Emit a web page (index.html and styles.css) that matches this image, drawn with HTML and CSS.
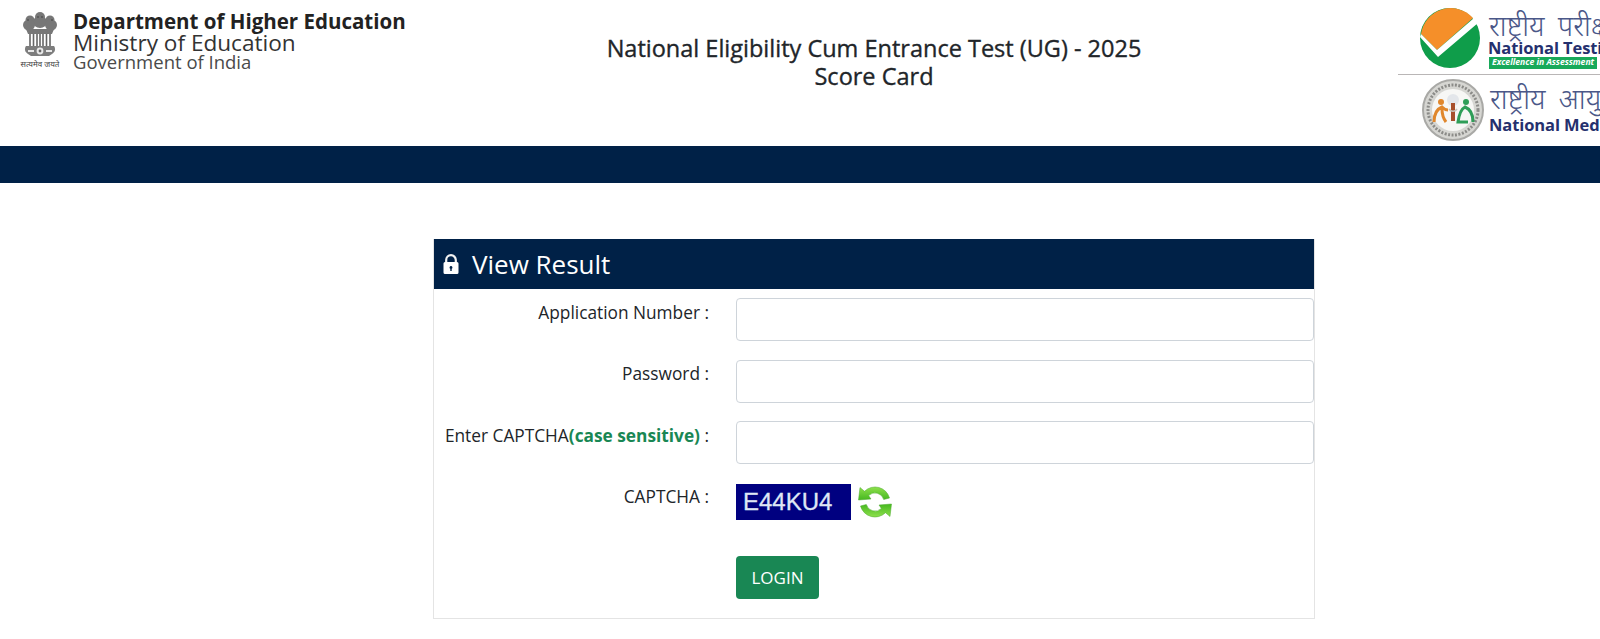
FILE: index.html
```html
<!DOCTYPE html>
<html lang="en">
<head>
  <meta charset="UTF-8">
  <title>NEET (UG) - 2025 Score Card</title>
  <link rel="stylesheet" href="styles.css">
</head>
<body>

<header class="top">
  <div class="govt">
    <div class="emblem">
      <svg width="44" height="47" viewBox="0 0 44 47">
        <!-- lion heads -->
        <g fill="#777">
          <circle cx="22" cy="7" r="5"/>
          <ellipse cx="22" cy="12" rx="7" ry="6"/>
          <circle cx="12" cy="10" r="4.5"/>
          <ellipse cx="11" cy="15" rx="6" ry="5.5"/>
          <circle cx="32" cy="10" r="4.5"/>
          <ellipse cx="33" cy="15" rx="6" ry="5.5"/>
          <path d="M8 19h28l-2 5H10z"/>
        </g>
        <g fill="#555">
          <circle cx="20" cy="7" r="1"/>
          <circle cx="24" cy="7" r="1"/>
          <circle cx="10" cy="10" r="1"/>
          <circle cx="34" cy="10" r="1"/>
        </g>
        <!-- mane stripes -->
        <g fill="none" stroke="#666" stroke-width="1.6">
          <path d="M12 24v12M15.5 24v12M19 24v12M22 24v12M25 24v12M28.5 24v12M32 24v12"/>
        </g>
        <!-- abacus with chakra -->
        <path d="M8 36h28c2 3 1 6-2 8l-3 2H13l-3-2c-3-2-4-5-2-8z" fill="#7d7d7d"/>
        <circle cx="22" cy="41" r="3.4" fill="#e8e8e8"/>
        <circle cx="22" cy="41" r="1.4" fill="#666"/>
        <path d="M10 41h6M28 41h6" stroke="#e8e8e8" stroke-width="2.2"/>
      </svg>
      <span class="motto">सत्यमेव जयते</span>
    </div>
    <div class="govt-text">
      <span class="govt-dept">Department of Higher Education</span>
      <span class="govt-min">Ministry of Education</span>
      <span class="govt-in">Government of India</span>
    </div>
  </div>

  <div class="title">
    <div>National Eligibility Cum Entrance Test (UG) - 2025</div>
    <div>Score Card</div>
  </div>

  <div class="agencies">
    <div class="agency agency-nta">
      <svg width="60" height="60" viewBox="0 0 60 60">
        <circle cx="30" cy="30" r="30" fill="#0f9d4a"/>
        <path d="M1 26L17 42 53 10A30 30 0 0 0 1 26z" fill="#f58f29"/>
        <path d="M0 29L18 49 58 15 54 10 17 42 1 26z" fill="#fff"/>
      </svg>
      <div class="agency-text">
        <span class="agency-hi">राष्ट्रीय परीक्षा एजेंसी</span>
        <span class="agency-en">National Testing Agency</span>
        <span class="agency-tag">Excellence in Assessment</span>
      </div>
    </div>
    <div class="agency agency-nmc">
      <svg width="62" height="62" viewBox="0 0 62 62">
        <circle cx="31" cy="31" r="30" fill="#d6d6d2" stroke="#a9a9a6" stroke-width="2"/>
        <circle cx="31" cy="31" r="25" fill="none" stroke="#8b8b88" stroke-width="3" stroke-dasharray="2 1.5"/>
        <circle cx="31" cy="31" r="21" fill="#f7f7f5"/>
        <circle cx="31" cy="21" r="6" fill="#e3e6ea"/>
        <path d="M31 24v18" stroke="#a8502c" stroke-width="4"/>
        <path d="M27 30c2 3 6 3 8 0" fill="none" stroke="#c9c4bb" stroke-width="1.5"/>
        <circle cx="19" cy="23" r="3" fill="#e0872c"/>
        <path d="M12 43c0-8 3-13 8-15 2 2 4 3 6 3M20 30c0 5 1 9 4 13" fill="none" stroke="#e0872c" stroke-width="3"/>
        <circle cx="44" cy="23" r="3" fill="#2f9e58"/>
        <path d="M51 43c0-8-3-13-8-15-4 2-6 8-7 15h10" fill="none" stroke="#2f9e58" stroke-width="3"/>
      </svg>
      <div class="agency-text">
        <span class="agency-hi">राष्ट्रीय आयुर्विज्ञान आयोग</span>
        <span class="agency-en">National Medical Commission</span>
      </div>
    </div>
  </div>
</header>

<div class="bar"></div>

<main class="panel">
  <h2 class="panel-head">
    <svg width="16" height="20" viewBox="0 0 16 20">
      <path d="M3.2 9V6a4.8 4.8 0 0 1 9.6 0v3" fill="none" stroke="#f2f2f2" stroke-width="2.2"/>
      <path fill-rule="evenodd" fill="#fff" d="M2 8h12a1.5 1.5 0 0 1 1.5 1.5v9A1.5 1.5 0 0 1 14 20H2a1.5 1.5 0 0 1-1.5-1.5v-9A1.5 1.5 0 0 1 2 8zM8 12a1.5 1.5 0 0 0-.7 2.8V17h1.4v-2.2A1.5 1.5 0 0 0 8 12z"/>
    </svg>
    View Result
  </h2>
  <form class="login-form">
    <label class="field-label" for="appno">Application Number :</label>
    <input class="field-input" type="text" id="appno">

    <label class="field-label" for="pwd">Password :</label>
    <input class="field-input" type="password" id="pwd">

    <label class="field-label" for="cap">Enter CAPTCHA<b class="hint">(case sensitive)</b> :</label>
    <input class="field-input" type="text" id="cap">

    <span class="field-label">CAPTCHA :</span>
    <div class="captcha-row">
      <span class="captcha">E44KU4</span>
      <svg width="36" height="36" viewBox="0 0 36 36">
        <defs>
          <linearGradient id="refreshGreen" x1="0" y1="0" x2="0" y2="1">
            <stop offset="0" stop-color="#8ee04c"/>
            <stop offset="1" stop-color="#45b81f"/>
          </linearGradient>
        </defs>
        <path fill="url(#refreshGreen)" stroke="#4aa82a" stroke-width=".5" d="M7.5 7.3L3 3.5 1.5 16 14 15 11.6 11.6A9 9 0 0 1 26.7 15.5L32.5 14A15 15 0 0 0 7.5 7.3z"/>
        <path fill="url(#refreshGreen)" stroke="#4aa82a" stroke-width=".5" transform="rotate(180 18 18)" d="M7.5 7.3L3 3.5 1.5 16 14 15 11.6 11.6A9 9 0 0 1 26.7 15.5L32.5 14A15 15 0 0 0 7.5 7.3z"/>
      </svg>
    </div>

    <span></span>
    <div><button class="login-btn" type="button">LOGIN</button></div>
  </form>
</main>

</body>
</html>
```

FILE: styles.css
```css
html, body {
  margin: 0;
  padding: 0;
  overflow: hidden;
}

body {
  font-family: "Open Sans", "Noto Sans", Arial, sans-serif;
  background-color: #fff;
  color: #212529;
  height: 639px;
}

/* Header with logos */
.top {
  height: 146px;
  display: grid;
  grid-template-columns: 408px 932px 260px;
  overflow: hidden;
}

.govt {
  display: flex;
  padding: 10px 0 0 18px;
  gap: 11px;
}

.emblem {
  width: 44px;
  display: flex;
  flex-direction: column;
  align-items: center;
}

.emblem svg {
  flex-shrink: 0;
}

.motto {
  font-family: "Noto Sans", "Noto Sans CJK SC", sans-serif;
  font-size: 8px;
  line-height: 14px;
  white-space: nowrap;
  color: #444;
}

.govt-text {
  display: flex;
  flex-direction: column;
  white-space: nowrap;
}

.govt-dept {
  font-size: 20.5px;
  font-weight: 700;
  line-height: 22px;
  color: #222;
}

.govt-min {
  font-size: 22.6px;
  line-height: 21px;
  color: #333;
}

.govt-in {
  font-size: 18.5px;
  line-height: 18px;
  color: #4a4a4a;
}

.title {
  padding-top: 34px;
  text-align: center;
  font-size: 23.5px;
  -webkit-text-stroke: 0.35px #212529;
  line-height: 28px;
}

.agencies {
  justify-self: end;
  width: 202px;
  overflow: hidden;
  white-space: nowrap;
}

.agency {
  display: flex;
}

.agency svg {
  flex-shrink: 0;
}

.agency-nta {
  padding: 8px 0 6px 22px;
  height: 60px;
  gap: 9px;
  border-bottom: 1px solid #b9b6b6;
}

.agency-nmc {
  padding: 4px 0 0 24px;
  gap: 6px;
}

.agency-text {
  display: flex;
  flex-direction: column;
  padding-top: 4px;
}

.agency-nmc .agency-text {
  padding-top: 6px;
}

.agency-nmc .agency-en {
  margin-top: 4px;
}

.agency-hi {
  font-family: "Noto Sans", "Noto Sans CJK SC", sans-serif;
  font-size: 28px;
  font-weight: 300;
  word-spacing: 6px;
  line-height: 27px;
  color: #4a5788;
}

.agency-en {
  font-size: 16.5px;
  font-weight: 700;
  line-height: 18px;
  letter-spacing: -0.1px;
  margin-left: -1px;
  color: #25306e;
}

.agency-tag {
  align-self: flex-start;
  background-color: #18a95a;
  color: #fff;
  font-size: 8.6px;
  font-weight: 700;
  font-style: italic;
  line-height: 11.5px;
  padding: 0 3px;
}

.bar {
  height: 37px;
  background-color: #002147;
}

/* Result panel */
.panel {
  width: 882px;
  margin: 56px 0 0 433px;
  border: 1px solid #e4e4e4;
  border-top: 0;
  box-sizing: border-box;
  height: 380px;
}

.panel-head {
  margin: 0;
  height: 50px;
  padding-left: 9px;
  display: flex;
  align-items: center;
  gap: 13px;
  background-color: #002147;
  color: #fff;
  font-size: 26px;
  font-weight: 400;
}

.login-form {
  display: grid;
  grid-template-columns: 302px 1fr;
  row-gap: 18.5px;
  padding-top: 9px;
}

.field-label {
  padding: 2.5px 27px 0 0;
  text-align: right;
  font-size: 17.3px;
  line-height: 24px;
  white-space: nowrap;
}

.hint {
  color: #198754;
}

.field-input {
  height: 43px;
  box-sizing: border-box;
  width: 100%;
  border: 1px solid #ced4da;
  border-radius: 4px;
  padding: 6px 12px;
  background-color: #fff;
}

.captcha-row {
  display: flex;
  gap: 6px;
  height: 36px;
  margin-top: 1px;
  margin-bottom: 18px;
}

.captcha {
  width: 115px;
  height: 36px;
  background-color: #000080;
  color: #dfe6f5;
  -webkit-text-stroke: 0.3px #dfe6f5;
  font-family: "Liberation Sans", Arial, sans-serif;
  font-size: 24px;
  line-height: 36px;
  padding-left: 7px;
  box-sizing: border-box;
}

.login-btn {
  width: 83px;
  height: 43px;
  background-color: #198754;
  color: #fff;
  border: none;
  border-radius: 4px;
  font-family: inherit;
  font-size: 17px;
  cursor: pointer;
}
```
